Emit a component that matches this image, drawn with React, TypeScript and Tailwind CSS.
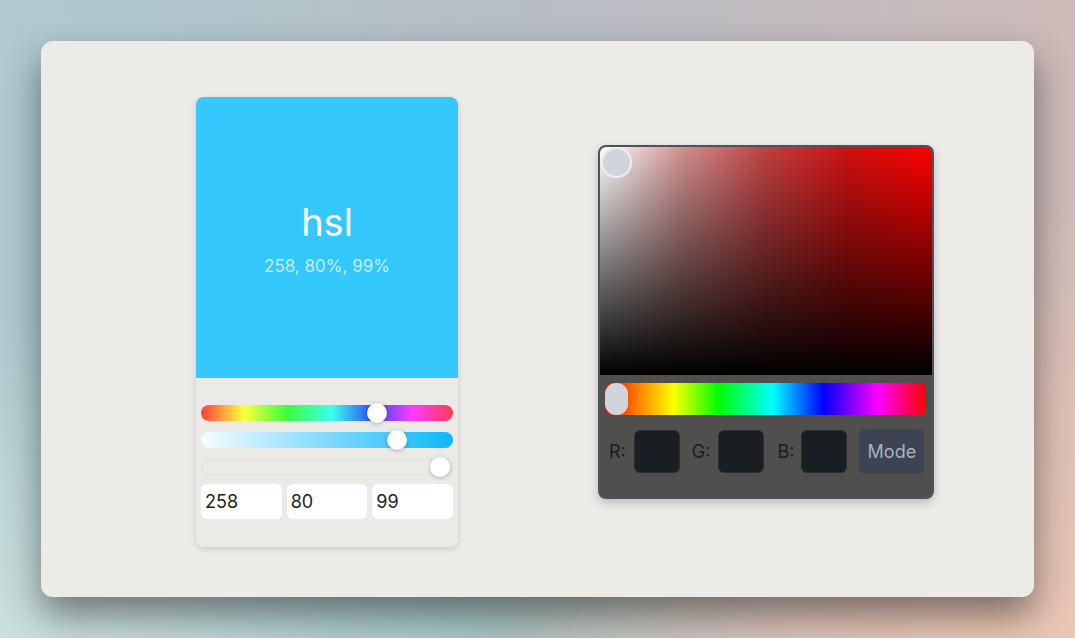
import { useState } from "react";

const hueTrack =
  "bg-[linear-gradient(to_right,#ff3b3b,#ffb340_10%,#ffff3b_17%,#3bff3b_34%,#3bffee_52%,#2f4cf5_68%,#ff3bff_84%,#ff3b55)]";

function Thumb({ pct }: { pct: number }) {
  return (
    <div
      className="absolute top-1/2 h-5 w-5 -translate-y-1/2 rounded-full bg-white shadow-[0_1px_4px_rgba(0,0,0,0.25)]"
      style={{ left: `calc((100% - 20px) * ${pct})` }}
    />
  );
}

function HslCard() {
  const [vals] = useState({ h: 258, s: 80, l: 99 });

  return (
    <div className="w-[262px] overflow-hidden rounded-lg bg-[#ebeae7] shadow-[0_2px_6px_rgba(0,0,0,0.15)]">
      <div className="flex h-[281px] flex-col items-center justify-center pt-[2px] bg-[#35c8fd] text-white">
        <div className="text-[38px] leading-[44px]">hsl</div>
        <div className="mt-[10px] text-[17px] leading-6 text-white/70">
          {vals.h}, {vals.s}%, {vals.l}%
        </div>
      </div>

      <div className="flex flex-col px-[5px] pb-[28px] pt-[27px]">
        <div className={`relative h-4 rounded-full ${hueTrack}`}>
          <Thumb pct={vals.h / 360} />
        </div>
        <div className="relative mt-[11px] h-4 rounded-full bg-[linear-gradient(to_right,#f7fcfe,#0cb8fb)]">
          <Thumb pct={vals.s / 100} />
        </div>
        <div className="relative mt-[11px] h-4 rounded-full border border-[#e3e2df]">
          <Thumb pct={vals.l / 100} />
        </div>

        <div className="mt-[9px] grid grid-cols-3 gap-[5px]">
          {[vals.h, vals.s, vals.l].map((v, i) => (
            <div
              key={i}
              className="flex h-[35px] items-center rounded-md bg-white pl-[4px] text-[18px] text-[#222]"
            >
              {v}
            </div>
          ))}
        </div>
      </div>
    </div>
  );
}

function RgbPicker() {
  return (
    <div className="mt-[48px] w-[336px] overflow-hidden rounded-lg border-2 border-[#4b5262] bg-[#504f4d] shadow-[0_4px_10px_rgba(0,0,0,0.2)]">
      {/* saturation / value square for hue 0 */}
      <div className="h-[228px] bg-[#ff0000]">
        <div className="h-full bg-[linear-gradient(to_right,#fff,rgba(191,191,191,0.75)_25%,rgba(128,128,128,0.5)_50%,rgba(64,64,64,0.25)_75%,rgba(0,0,0,0))]">
          <div className="relative h-full bg-[linear-gradient(to_top,#000,rgba(0,0,0,0))]">
            <div className="absolute left-[1px] top-0 h-[31px] w-[31px] rounded-full border-2 border-[#eceef1] bg-[#d1d5db]" />
          </div>
        </div>
      </div>

      <div className="px-[6px] pb-[23px] pt-[8px]">
        <div className="relative h-8 rounded-md bg-[linear-gradient(to_right,#f00,#ff8000_10%,#ff0_21%,#0f0_35%,#0ff_52%,#00f_68%,#f0f_85%,#f00)]">
          <div className="absolute left-[-1px] top-0 h-8 w-[23px] rounded-[11px] bg-[#d1d5db]" />
        </div>

        <div className="mt-[14px] flex items-center pl-[3px] text-[18px] text-[#1c1c1c]">
          <span>R:</span>
          <div className="ml-[8px] h-[43px] w-[46px] rounded-md border border-[#2a2f35] bg-[#1a1d21]" />
          <span className="ml-[12px]">G:</span>
          <div className="ml-[8px] h-[43px] w-[46px] rounded-md border border-[#2a2f35] bg-[#1a1d21]" />
          <span className="ml-[13px]">B:</span>
          <div className="ml-[7px] h-[43px] w-[46px] rounded-md border border-[#2a2f35] bg-[#1a1d21]" />
          <button className="ml-[12px] h-[45px] w-[65px] rounded-md bg-[#3c4454] text-[18px] text-[#a9b1be]">
            Mode
          </button>
        </div>
      </div>
    </div>
  );
}

export default function App() {
  return (
    <div
      className="h-[638px] w-[1075px] bg-[radial-gradient(ellipse_at_0%_100%,#cbe0dc,transparent_35%),radial-gradient(ellipse_at_100%_100%,#ebc6b4,transparent_50%),radial-gradient(ellipse_at_45%_100%,#93c3c6,transparent_40%),linear-gradient(to_right,#adcad0,#b8bdc5_50%,#cdbab8)] p-[41px]"
      style={{ fontFamily: "Inter, 'Noto Sans', sans-serif" }}
    >
      <div className="flex h-[556px] w-[993px] items-start gap-[140px] rounded-xl bg-[#ecebe8] pl-[155px] pt-[56px] shadow-[0_18px_36px_rgba(0,0,0,0.45)]">
        <HslCard />
        <RgbPicker />
      </div>
    </div>
  );
}
